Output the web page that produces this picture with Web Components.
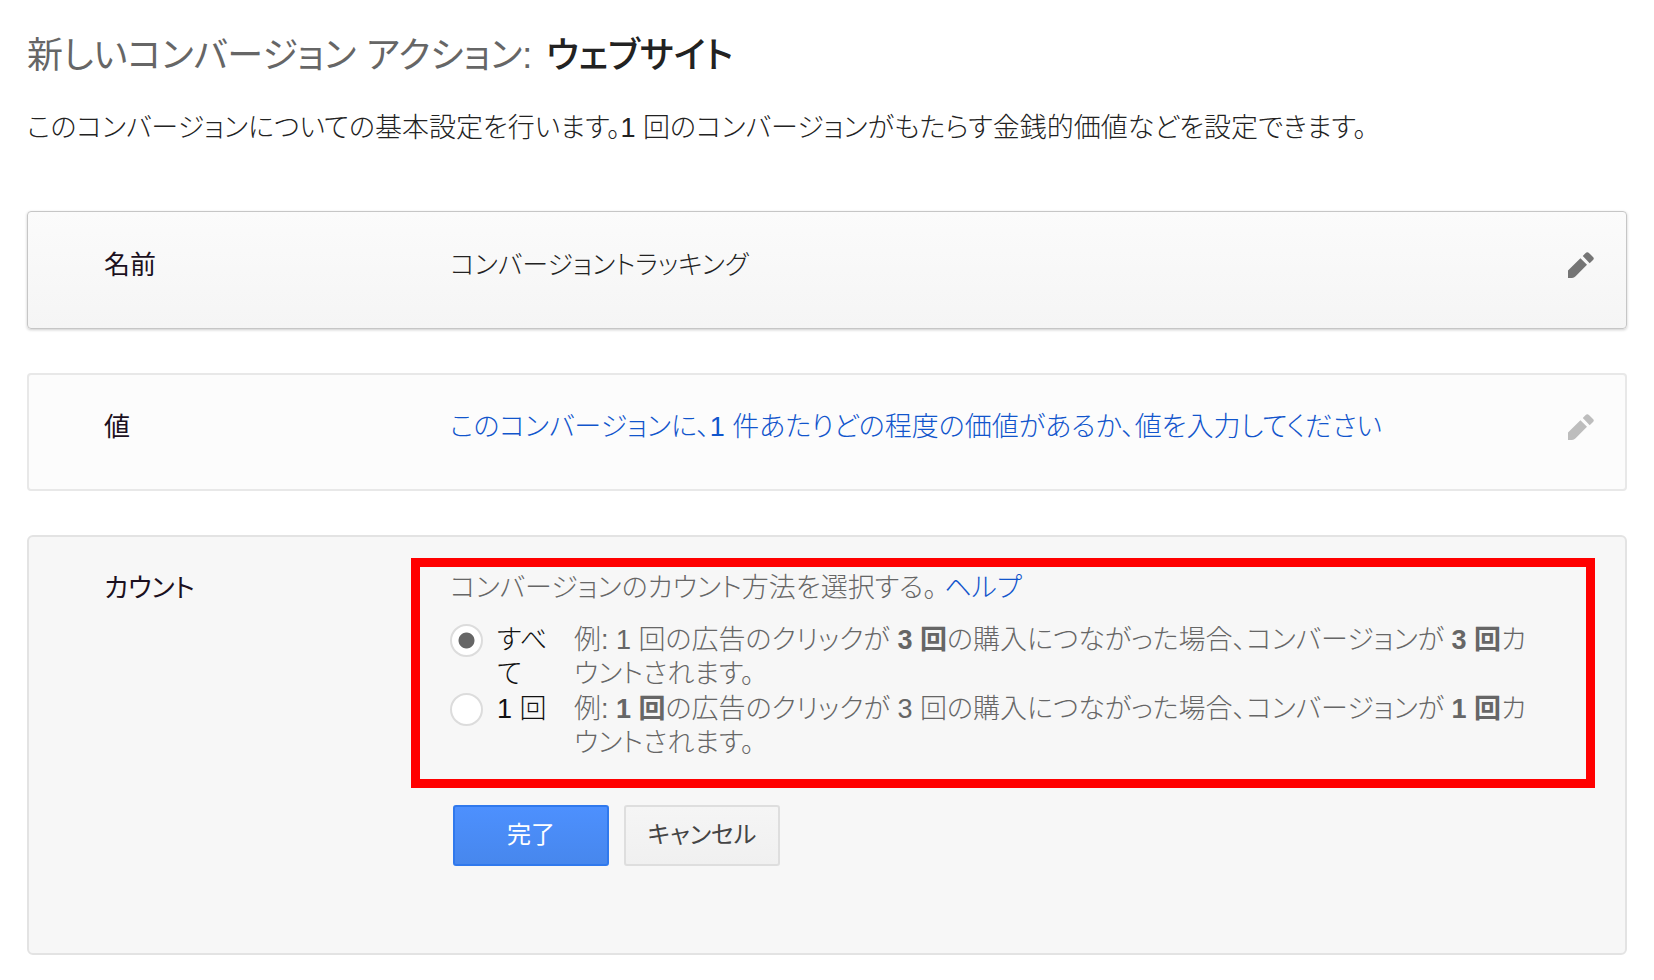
<!DOCTYPE html>
<html lang="ja">
<head>
<meta charset="utf-8">
<meta name="viewport" content="width=device-width, initial-scale=1">
<title>新しいコンバージョン アクション</title>
<style>
  body {
    margin: 0;
    background: #fff;
    color: #222;
    font: 300 27px/34px "Liberation Sans", "Noto Sans CJK JP", sans-serif;
    font-feature-settings: "palt";
  }
</style>
</head>
<body>
<conversion-page></conversion-page>

<script>
const define = (name, html, setup) => {
  const template = document.createElement("template");
  template.innerHTML = html;
  customElements.define(name, class extends HTMLElement {
    constructor() {
      super();
      this.attachShadow({ mode: "open" }).append(template.content.cloneNode(true));
      if (setup) setup(this.shadowRoot);
    }
  });
};

/* Pencil button at the right end of a summary card */
define("edit-button", `
  <style>
    :host { display: block; color: #757575; }
    button { display: block; padding: 0; border: 0; background: none; color: inherit; cursor: pointer; }
    svg { display: block; width: 26px; height: 26px; fill: currentColor; }
  </style>
  <button type="button" aria-label="編集">
    <svg viewBox="0 0 26 26" aria-hidden="true">
      <path d="M0 18.6 12.4 6.2 19 12.7 7.6 24.2Q6 26 4 26H0z"/>
      <path d="M14.8 3.9 17.4 1.2q1.9-1.9 3.8 0l3.8 3.7q1.6 1.6 0 3.2l-3.3 3.2z"/>
    </svg>
  </button>`);

/* One settings row: label, content and an optional action */
define("setting-card", `
  <style>
    :host {
      display: grid;
      grid-template-columns: 346px minmax(0, 1fr) auto;
      box-sizing: border-box;
      min-height: 118px;
      padding: 36px 32px 36px 76px;
      border: 1px solid #c6c6c6;
      border-radius: 4px;
      background: linear-gradient(#fbfbfb, #f5f5f5);
      box-shadow: 0 1px 3px #0003;
    }
    :host([pending]) {
      border: 2px solid #e8e8e8;
      padding: 35px 31px 35px 75px;
      background: #fcfcfc;
      box-shadow: none;
      --edit: #bdbdbd;
    }
    :host([open]) {
      grid-template-columns: 307px minmax(0, 1fr);
      min-height: 420px;
      padding: 21px 30px 21px 75px;
      border: 2px solid #e3e3e3;
      border-radius: 6px;
      background: #f7f7f7;
      box-shadow: none;
    }
    h2 { margin: 0; font: inherit; font-size: 26px; font-weight: 400; color: #1b1020; }
    :host([open]) h2 { padding-top: 13px; }
    ::slotted(edit-button) { margin-top: 4px; color: var(--edit, #757575); }
    ::slotted([slot="value"]) { font-size: 26px; }
  </style>
  <h2><slot name="label"></slot></h2>
  <div><slot name="value"></slot><slot></slot></div>
  <slot name="action"></slot>`);

define("count-options", `
  <style>
    :host { display: block; color: #666; }
    form { margin: 0; }
    fieldset {
      min-width: 0;
      margin: 0 0 17px;
      padding: 4px 46px 19px 30px;
      border: 9px solid #f00;
    }
    p { margin: 0; }
    .lead { margin-bottom: 18px; }
    a { color: #15c; text-decoration: none; }
    .options { display: grid; gap: 1px; }
    .option {
      display: grid;
      grid-template-columns: 33px 56px minmax(0, 1fr);
      column-gap: 14px;
    }
    .option p { padding-left: 7px; }
    label { color: #111; word-break: break-all; }
    input {
      appearance: none;
      box-sizing: border-box;
      width: 33px;
      height: 33px;
      margin: 1px 0 0;
      border: 2px solid #dcdcdc;
      border-radius: 50%;
      background: #fff;
    }
    input:checked { background: radial-gradient(circle closest-side, #666 52%, #fff 58%); }
    b { font-weight: 700; }
    .buttons { display: flex; gap: 15px; padding-left: 42px; }
    button {
      box-sizing: border-box;
      width: 156px;
      height: 61px;
      padding: 0 0 2px;
      border: 2px solid #dedede;
      border-radius: 3px;
      background: linear-gradient(#f5f5f5, #f0f0f0);
      color: #444;
      font: inherit;
      font-size: 24px;
      font-weight: 400;
      font-feature-settings: inherit;
    }
    .primary { border-color: #3079ed; background: linear-gradient(#4d90fe, #4787ed); color: #fff; }
  </style>
  <form>
    <fieldset>
      <p class="lead">コンバージョンのカウント方法を選択する。 <a href="#help">ヘルプ</a></p>
      <div class="options">
        <div class="option">
          <input type="radio" name="count" id="every" aria-describedby="every-note" checked>
          <label for="every">すべて</label>
          <p id="every-note">例: 1 回の広告のクリックが <b>3 回</b>の購入につながった場合、コンバージョンが <b>3 回</b>カウントされます。</p>
        </div>
        <div class="option">
          <input type="radio" name="count" id="once" aria-describedby="once-note">
          <label for="once">1 回</label>
          <p id="once-note">例: <b>1 回</b>の広告のクリックが 3 回の購入につながった場合、コンバージョンが <b>1 回</b>カウントされます。</p>
        </div>
      </div>
    </fieldset>
    <div class="buttons">
      <button type="submit" class="primary">完了</button>
      <button type="button">キャンセル</button>
    </div>
  </form>`, root => root.querySelector("form").addEventListener("submit", e => e.preventDefault()));

define("page-heading", `
  <style>
    :host { display: block; }
    h1 { display: flex; flex-wrap: wrap; column-gap: 14px; margin: 0 0 28px; font-size: 36px; line-height: 54px; font-weight: 400; color: #666; }
    h1 ::slotted(strong) { font-weight: 500; color: #222; }
    p { margin: 0; }
  </style>
  <h1><slot name="title"></slot> <slot name="target"></slot></h1>
  <p><slot></slot></p>`);

define("conversion-page", `
  <style>
    :host { display: block; padding: 29px 27px 25px; }
    page-heading { margin-bottom: 66px; }
    main { display: grid; gap: 44px; }
    a { color: #15c; text-decoration: none; }
  </style>
  <page-heading>
    <span slot="title">新しいコンバージョン アクション:</span>
    <strong slot="target">ウェブサイト</strong>
    このコンバージョンについての基本設定を行います。1 回のコンバージョンがもたらす金銭的価値などを設定できます。
  </page-heading>
  <main>
    <setting-card>
      <span slot="label">名前</span>
      <span slot="value">コンバージョントラッキング</span>
      <edit-button slot="action"></edit-button>
    </setting-card>
    <setting-card pending>
      <span slot="label">値</span>
      <a href="#value">このコンバージョンに、1 件あたりどの程度の価値があるか、値を入力してください</a>
      <edit-button slot="action"></edit-button>
    </setting-card>
    <setting-card open>
      <span slot="label">カウント</span>
      <count-options></count-options>
    </setting-card>
  </main>`);
</script>
</body>
</html>
